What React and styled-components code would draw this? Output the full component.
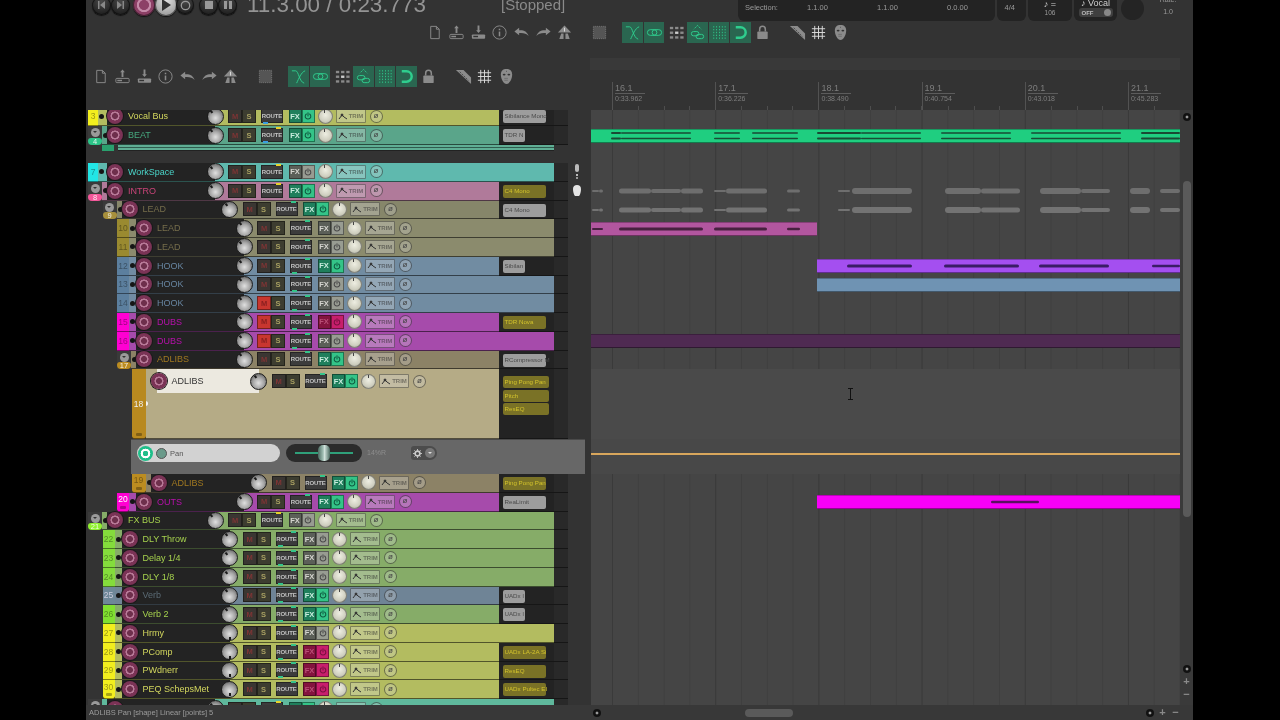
import React from 'react';
import styled, { createGlobalStyle } from 'styled-components';

const GlobalStyle = createGlobalStyle`
  html, body { margin: 0; padding: 0; background: #000; }
  body { font-family: "Liberation Sans", Arial, sans-serif; }
`;

const App = styled.div`
  width: 1107px;
  height: 720px;
  margin-left: 86px;
  background: #333;
  overflow: hidden;
  display: flex;
  flex-direction: column;
  color: #aaa;
  filter: blur(0.3px);
`;

/* ---------- header ---------- */
const TopStrip = styled.div`
  height: 58px;
  flex: none;
  overflow: hidden;
`;
const TopRow = styled.div`
  height: 10px;
  display: flex;
  align-items: center;
  padding-left: 6px;
  margin-bottom: 11px;
`;
const Transport = styled.div`
  width: 155px;
  display: flex;
  align-items: center;
  flex: none;
`;
const RoundBtn = styled.div`
  width: ${(p) => p.$size}px;
  height: ${(p) => p.$size}px;
  margin-left: ${(p) => p.$gap || 0}px;
  flex: none;
  border-radius: 50%;
  display: flex;
  align-items: center;
  justify-content: center;
  background: ${(p) => p.$bg || 'radial-gradient(circle at 50% 30%, #4a4a4a, #232323 70%)'};
  box-shadow: 0 1px 1px #111, inset 0 0 0 1px rgba(0, 0, 0, 0.5);
`;
const TimeText = styled.div`
  width: 254px;
  flex: none;
  font-size: 22.4px;
  line-height: 22px;
  color: #949494;
  white-space: nowrap;
`;
const StoppedText = styled.div`
  width: 237px;
  flex: none;
  font-size: 15px;
  line-height: 16px;
  color: #8a8a8a;
`;
const InfoPanel = styled.div`
  height: 21px;
  width: ${(p) => p.$w}px;
  margin-right: 2px;
  flex: none;
  align-self: flex-start;
  background: #232323;
  border-radius: 0 0 6px 6px;
  font-size: 7.5px;
  color: #9a9a9a;
  display: flex;
  align-items: center;
  justify-content: ${(p) => (p.$center ? 'center' : 'flex-start')};
  overflow: hidden;
`;
const SelCell = styled.span`
  width: ${(p) => p.$w}px;
  flex: none;
  padding-bottom: 7px;
`;
const StackCell = styled.div`
  height: 21px;
  width: 100%;
  display: flex;
  flex-direction: column;
  align-items: center;
  justify-content: flex-end;
  padding-bottom: 4px;
  box-sizing: border-box;
  font-size: 6.5px;
  line-height: 8px;
`;
const NoteLine = styled.div`
  font-size: 9px;
  line-height: 7px;
  color: #cfcfcf;
  height: 7px;
  margin-bottom: 1px;
  white-space: nowrap;
`;
const OffToggle = styled.div`
  width: 34px;
  height: 9px;
  background: #3f3f3f;
  border-radius: 3px;
  display: flex;
  align-items: center;
  justify-content: space-between;
  padding: 0 2px 0 3px;
  box-sizing: border-box;
  font-size: 6px;
  font-weight: bold;
  color: #bbb;
`;
const OffDot = styled.span`
  width: 7px;
  height: 7px;
  border-radius: 50%;
  background: #888;
`;
const BigKnob = styled.div`
  width: 23px;
  height: 23px;
  margin: -3px 0 0 2px;
  flex: none;
  align-self: flex-start;
  border-radius: 50%;
  background: #242424;
`;
const RateBlock = styled.div`
  margin: -6px 0 0 12px;
  width: 24px;
  text-align: center;
  font-size: 7px;
  line-height: 12px;
  color: #999;
  align-self: flex-start;
`;

const Toolbar = styled.div`
  display: flex;
  align-items: center;
  height: 22px;
  padding-left: ${(p) => p.$left}px;
`;
const ToolGroup = styled.div`
  display: flex;
  margin-left: ${(p) => p.$gap || 0}px;
`;
const Slot = styled.div`
  width: 21.7px;
  height: 21px;
  flex: none;
  display: flex;
  align-items: center;
  justify-content: center;
  background: ${(p) => (p.$active ? '#2a6650' : 'transparent')};
  border-right: ${(p) => (p.$active ? '1px solid #333' : 'none')};
  box-sizing: border-box;
`;

const G = '#8b8b8b';
const A = '#2fce8e';
const toolPaths = {
  doc: <path d="M5 2.5h6l3 3v10H5z M11 2.5v3h3" fill="none" stroke={G} strokeWidth="1" />,
  up: (
    <>
      <path d="M9 1.5l2.5 3H10v5H8v-5H6.5z" fill={G} />
      <rect x="2" y="11" width="14" height="4.5" rx="1" fill="none" stroke={G} />
      <rect x="3.5" y="12.5" width="5" height="1.5" fill={G} />
    </>
  ),
  down: (
    <>
      <path d="M9 9.5l2.5-3H10v-5H8v5H6.5z" fill={G} />
      <rect x="2" y="11" width="14" height="4.5" rx="1" fill={G} />
      <rect x="3.5" y="12.5" width="5" height="1.5" fill="#333" />
    </>
  ),
  info: (
    <>
      <circle cx="9" cy="9" r="7" fill="none" stroke={G} />
      <rect x="8.2" y="8" width="1.6" height="5" fill={G} />
      <rect x="8.2" y="5" width="1.6" height="1.6" fill={G} />
    </>
  ),
  undo: <path d="M1.5 8l5-4v2.6c4.5-.5 8.5 1.2 10 6-2.4-2.5-5.5-3.4-10-3V12z" fill={G} />,
  redo: <path d="M16.5 8l-5-4v2.6c-4.5-.5-8.5 1.2-10 6 2.4-2.5 5.5-3.4 10-3V12z" fill={G} />,
  road: (
    <>
      <path d="M9 1.5l7 7.5H2z" fill={G} />
      <path d="M5.5 10H8v6H3.5z M10 10h2.5l2 6H10z" fill={G} />
      <path d="M9 4v4" stroke="#ddd" strokeWidth="1" />
    </>
  ),
  square: <rect x="2.5" y="2.5" width="13" height="13" fill="#555" stroke="#777" strokeDasharray="1 1" />,
  cross: <path d="M2 3h4c3 0 4 12 9 13 M16 3c-4 1-7 9-9 13" fill="none" stroke={A} strokeWidth="1" />,
  link: (
    <>
      <rect x="1.5" y="6" width="10" height="6" rx="3" fill="none" stroke={A} />
      <rect x="6.5" y="6" width="10" height="6" rx="3" fill="none" stroke={A} />
    </>
  ),
  grid: (
    <g fill={G}>
      {[3, 8, 13].map((y) => [2, 7.5, 13].map((x) => (
        <rect key={`${x}-${y}`} x={x} y={y} width="3.5" height="2.5" fill={x === 7.5 && y === 8 ? '#ccc' : G} />
      )))}
    </g>
  ),
  group: (
    <>
      <path d="M9 1.5l4 4M9 1.5l-4 4" stroke={A} strokeDasharray="1.5 1" fill="none" />
      <rect x="2.5" y="8" width="8" height="4.5" rx="2.2" fill="none" stroke={A} />
      <rect x="7.5" y="11" width="8" height="4.5" rx="2.2" fill="none" stroke={A} />
    </>
  ),
  dots: (
    <g fill={A}>
      {[3, 6, 9, 12, 15].map((x) => [3, 6, 9, 12, 15].map((y) => (
        <rect key={`${x}-${y}`} x={x - 0.5} y={y - 0.7} width="0.9" height="1.4" />
      )))}
    </g>
  ),
  magnet: <path d="M4 3.5h5a5.5 5.5 0 0 1 0 11H4" fill="none" stroke={A} strokeWidth="2.6" />,
  lock: (
    <>
      <rect x="3.5" y="8" width="11" height="8" rx="1" fill={G} />
      <path d="M6 8V5.5a3 3 0 0 1 6 0V8" fill="none" stroke={G} strokeWidth="1.6" />
    </>
  ),
  ruler: (
    <>
      <path d="M1 2h8l8 8v7z" fill={G} />
      <path d="M5 4l9 9" stroke="#333" strokeDasharray="1.5 1.5" />
    </>
  ),
  hash: <path d="M5 2v14M9 2v14M13 2v14M2 5h14M2 9h14M2 13h14" stroke="#ddd" strokeWidth="1" fill="none" />,
  mask: (
    <>
      <path d="M9 1c4 0 6 2 6 6 0 5-3 10-6 10s-6-5-6-10c0-4 2-6 6-6z" fill={G} />
      <ellipse cx="6.5" cy="7" rx="1.5" ry="1" fill="#333" />
      <ellipse cx="11.5" cy="7" rx="1.5" ry="1" fill="#333" />
      <path d="M7 11h4M7 13h4M9 3v2" stroke="#444" strokeWidth="0.8" strokeDasharray="1 1" />
    </>
  ),
};

const ToolIcon = ({ name, active }) => (
  <Slot $active={active}>
    <svg width="17" height="17" viewBox="0 0 18 18">{toolPaths[name]}</svg>
  </Slot>
);

const ToolRow = ({ left }) => (
  <Toolbar $left={left}>
    <ToolGroup>
      {['doc', 'up', 'down', 'info', 'undo', 'redo', 'road'].map((n) => <ToolIcon key={n} name={n} />)}
    </ToolGroup>
    <ToolGroup $gap={13}><ToolIcon name="square" /></ToolGroup>
    <ToolGroup $gap={11.5}>
      <ToolIcon name="cross" active />
      <ToolIcon name="link" active />
      <ToolIcon name="grid" />
      <ToolIcon name="group" active />
      <ToolIcon name="dots" active />
      <ToolIcon name="magnet" active />
      <ToolIcon name="lock" />
    </ToolGroup>
    <ToolGroup $gap={12.5}>
      <ToolIcon name="ruler" />
      <ToolIcon name="hash" />
      <ToolIcon name="mask" />
    </ToolGroup>
  </Toolbar>
);

/* ---------- body columns ---------- */
const Main = styled.div`
  flex: 1;
  display: flex;
  min-height: 0;
`;
const LeftCol = styled.div`
  width: 505px;
  flex: none;
  display: flex;
  flex-direction: column;
  min-height: 0;
`;
const LeftBar = styled.div`
  height: 52px;
  flex: none;
  padding-top: 7px;
  box-sizing: border-box;
`;
const TrackScroll = styled.div`
  flex: 1;
  overflow: hidden;
  width: 499px;
`;
const Stack = styled.div`
  margin-top: -3px;
`;

/* ---------- track rows ---------- */
const Row = styled.div`
  height: ${(p) => p.$h}px;
  display: flex;
  width: 499px;
  padding-left: ${(p) => 2 + p.$d * 14.5}px;
  box-sizing: border-box;
`;
const NumCell = styled.div`
  width: ${(p) => p.$w}px;
  flex: none;
  position: relative;
  background: ${(p) => p.$bg};
  color: ${(p) => p.$fg};
  font-size: 8.5px;
  display: flex;
  align-items: center;
  justify-content: center;
  border-bottom: 1px solid rgba(0, 0, 0, 0.45);
  border-radius: ${(p) => (p.$foot ? '0 0 3px 3px' : '0')};
  box-sizing: border-box;
  padding-bottom: ${(p) => (p.$foot && !p.$tall ? 5 : 0)}px;
  overflow: hidden;
`;
const FootIcon = styled.span`
  position: absolute;
  left: 50%;
  bottom: 2px;
  margin-left: -3px;
  width: 6px;
  height: 3px;
  background: rgba(0, 0, 0, 0.3);
  border-radius: 1px;
`;
const FolderCell = styled.div`
  width: 14px;
  flex: none;
  position: relative;
  background: #3a3a3a;
  display: flex;
  justify-content: center;
  padding-top: 1px;
  box-sizing: border-box;
`;
const FolderIcon = styled.span`
  width: 9px;
  height: 9px;
  margin-top: 1px;
  border-radius: 50%;
  background: #9a9a9a;
  position: relative;
  &::after {
    content: '';
    position: absolute;
    left: 2px;
    top: 3px;
    border: 2.5px solid transparent;
    border-top-color: #333;
    border-bottom-width: 0;
  }
`;
const NumPill = styled.span`
  position: absolute;
  left: 0;
  right: 0;
  bottom: 0;
  height: 7px;
  border-radius: 3px 3px 4px 4px;
  background: ${(p) => p.$bg};
  color: rgba(255, 255, 255, 0.85);
  font-size: 7.5px;
  line-height: 7px;
  text-align: center;
`;
const Inner = styled.div`
  flex: 1;
  min-width: 0;
  display: flex;
  align-items: flex-start;
  background: ${(p) => p.$bg};
  border-bottom: 1px solid rgba(0, 0, 0, 0.55);
  box-sizing: border-box;
`;
const Tab = styled.div`
  width: ${(p) => p.$w}px;
  height: ${(p) => p.$line}px;
  flex: none;
  display: flex;
  align-items: center;
`;
const PortDot = styled.span`
  width: 5px;
  height: 5px;
  margin-left: ${(p) => (p.$light ? -2.5 : 1)}px;
  margin-top: ${(p) => (p.$light ? 44 : 0)}px;
  flex: none;
  border-radius: 50%;
  background: ${(p) => (p.$light ? '#f2f2f2' : '#151515')};
`;
const NamePanel = styled.div`
  width: 108px;
  height: ${(p) => p.$line}px;
  flex: none;
  display: flex;
  align-items: center;
  background: ${(p) => (p.$selected ? 'linear-gradient(90deg, transparent 6px, #ece9e0 6px)' : '#232323')};
`;
const ArmBtn = styled.div`
  width: 16px;
  height: 16px;
  flex: none;
  border-radius: 50%;
  background: radial-gradient(circle at 50% 50%, #6e2f4c 0 24%, #b87a98 28% 38%, #7b3356 42% 62%, #53223b 90%);
  box-shadow: 0 0 0 1px #181818;
`;
const TrackName = styled.div`
  flex: 1;
  min-width: 0;
  padding-left: 5px;
  font-size: 9px;
  color: ${(p) => p.$color};
  white-space: nowrap;
  overflow: hidden;
`;
const PanKnob = styled.div`
  width: 17px;
  height: 17px;
  flex: none;
  margin-right: -8.5px;
  border-radius: 50%;
  border: 1px solid #1c1c1c;
  box-sizing: border-box;
  position: relative;
  z-index: 1;
  background: radial-gradient(circle at 50% 60%, #e0e0e0 0, #a8a8a8 45%, #5a5a5a 90%);
  &::after {
    content: '';
    position: absolute;
    left: 6.5px;
    top: 0.5px;
    width: 2px;
    height: 3px;
    background: #1a1a1a;
    transform-origin: 1px 7px;
    transform: rotate(${(p) => p.$angle}deg);
  }
`;
const Strip = styled.div`
  flex: 1;
  min-width: 0;
  height: ${(p) => p.$line}px;
  display: flex;
  align-items: center;
  padding-left: 13px;
`;
const PairBtn = styled.div`
  width: ${(p) => p.$w}px;
  height: 14px;
  flex: none;
  margin-left: ${(p) => p.$gap || 0}px;
  display: flex;
  align-items: center;
  justify-content: center;
  box-sizing: border-box;
  font-size: 7.5px;
  font-weight: bold;
  background: ${(p) => p.$bg};
  color: ${(p) => p.$fg};
  box-shadow: inset 0 0 0 1px rgba(0, 0, 0, 0.4);
  position: relative;
`;
const RouteDot = styled.span`
  position: absolute;
  width: 5px;
  height: 2px;
  background: ${(p) => p.$color};
  top: ${(p) => (p.$low ? 'auto' : '-1px')};
  bottom: ${(p) => (p.$low ? '-1px' : 'auto')};
  left: ${(p) => (p.$low ? '2px' : 'auto')};
  right: ${(p) => (p.$low ? 'auto' : '2px')};
`;
const RouteText = styled.span`
  font-size: 6px;
  letter-spacing: -0.1px;
`;
const VolKnob = styled.div`
  width: 15px;
  height: 15px;
  flex: none;
  margin-left: ${(p) => p.$gap}px;
  border-radius: 50%;
  border: 1px solid rgba(20, 20, 20, 0.4);
  box-sizing: border-box;
  background: radial-gradient(circle at 50% 40%, #eeeee2, #cfcfc0 60%, #a5a594);
  position: relative;
  &::after {
    content: '';
    position: absolute;
    left: 5.5px;
    top: 0;
    width: 1px;
    height: 3px;
    background: #444;
  }
`;
const TrimBtn = styled.div`
  width: 30px;
  height: 14px;
  flex: none;
  margin-left: 3px;
  display: flex;
  align-items: center;
  justify-content: center;
  gap: 1px;
  box-sizing: border-box;
  border: 1px solid rgba(0, 0, 0, 0.35);
  border-radius: 1px;
  background: rgba(225, 225, 225, 0.32);
  color: rgba(40, 40, 40, 0.5);
  font-size: 6px;
  font-weight: bold;
`;
const PhaseBtn = styled.div`
  width: 13px;
  height: 13px;
  flex: none;
  margin-left: 4px;
  border-radius: 50%;
  border: 1px solid rgba(0, 0, 0, 0.45);
  box-sizing: border-box;
  background: rgba(225, 225, 225, 0.28);
  color: #444;
  font-size: 8px;
  line-height: 10px;
  text-align: center;
`;
const FxArea = styled.div`
  width: 55px;
  flex: none;
  background: #232323;
  display: flex;
  flex-direction: column;
  align-items: flex-start;
  gap: 1.5px;
  padding: ${(p) => (p.$tall ? 7 : 3)}px 0 0 3.5px;
  box-sizing: border-box;
  border-bottom: 1px solid #161616;
  overflow: hidden;
`;
const Chip = styled.div`
  width: ${(p) => p.$w}px;
  height: ${(p) => (p.$tall ? 12 : 13)}px;
  flex: none;
  border-radius: 2px;
  padding-left: 2px;
  box-sizing: border-box;
  font-size: 6.2px;
  line-height: 12px;
  white-space: nowrap;
  background: ${(p) => (p.$on ? '#7a7226' : '#9d9d9d')};
  color: ${(p) => (p.$on ? '#d2c22c' : '#4a4a4a')};
`;
const Tail = styled.div`
  width: 14px;
  flex: none;
  background: #292929;
  border-bottom: 1px solid #161616;
  box-sizing: border-box;
`;
const Side = styled.div`
  width: 17px;
  flex: none;
  display: flex;
  align-items: center;
  justify-content: center;
`;
const SepRow = styled.div`
  height: 18px;
  width: 482px;
  padding-left: 16px;
  box-sizing: border-box;
`;
const SepInner = styled.div`
  height: 6px;
  display: flex;
`;
const SepGreen = styled.div`
  width: 12px;
  background: #2aa06e;
  margin-right: 4px;
`;
const SepBars = styled.div`
  flex: 1;
  background: linear-gradient(#5fae94 0 2px, #2f5c4e 2px 3px, #5fae94 3px 5px, #222 5px);
  margin-right: 14px;
`;

/* ---------- envelope lane in the track panel ---------- */
const EnvLane = styled.div`
  height: 35px;
  width: 454px;
  margin-left: 45px;
  padding: 4px 0 0 6px;
  box-sizing: border-box;
  background: #676767;
  border-top: 1px solid #4a4a4a;
  display: flex;
  align-items: flex-start;
  color: #8d8d8d;
  font-size: 7px;
`;
const EnvName = styled.div`
  width: 143px;
  height: 18px;
  flex: none;
  border-radius: 9px;
  background: #d2d2d2;
  display: flex;
  align-items: center;
  gap: 3px;
  padding-left: 1px;
  box-sizing: border-box;
  color: #555;
  font-size: 7.5px;
`;
const EnvRing = styled.span`
  width: 15px;
  height: 15px;
  border-radius: 50%;
  background: radial-gradient(circle, #1fbf8a 0 25%, #fff 28% 45%, #1fbf8a 48%);
`;
const EnvPower = styled.span`
  width: 9px;
  height: 9px;
  border-radius: 50%;
  background: #6a9a8a;
  border: 1px solid #555;
`;
const EnvSlider = styled.div`
  width: 76px;
  height: 18px;
  margin-left: 6px;
  flex: none;
  border-radius: 9px;
  background: #2b2b2b;
  display: flex;
  align-items: center;
  justify-content: center;
  position: relative;
  &::before {
    content: '';
    position: absolute;
    left: 9px;
    right: 9px;
    top: 8px;
    height: 1.5px;
    background: #2fa07a;
  }
`;
const EnvThumb = styled.span`
  width: 12px;
  height: 16px;
  border-radius: 5px;
  position: relative;
  background: linear-gradient(90deg, #4a6a60, #a8c4ba 45%, #d8e8e2 52%, #4a6a60);
`;
const EnvValue = styled.div`
  width: 44px;
  margin-left: 5px;
  line-height: 18px;
  flex: none;
`;
const GearBtn = styled.div`
  width: 26px;
  height: 14px;
  margin-top: 2px;
  border-radius: 3px 7px 7px 3px;
  background: #4c4c4c;
  display: flex;
  align-items: center;
  justify-content: space-between;
  padding: 0 2px;
  box-sizing: border-box;
`;
const GearDrop = styled.span`
  width: 10px;
  height: 10px;
  border-radius: 50%;
  background: #777;
  display: flex;
  align-items: center;
  justify-content: center;
  &::after {
    content: '';
    border: 2.5px solid transparent;
    border-top-color: #ddd;
    border-bottom-width: 0;
  }
`;

/* ---------- arrange view ---------- */
const RightCol = styled.div`
  flex: 1;
  min-width: 0;
  display: flex;
  flex-direction: column;
`;
const Band = styled.div`
  height: 12px;
  flex: none;
  width: 590px;
  margin-left: -1px;
  background: #393939;
`;
const Ruler = styled.div`
  height: 40px;
  flex: none;
  width: 589px;
  display: flex;
  padding-left: 21px;
  box-sizing: border-box;
  overflow: hidden;
`;
const RulerBar = styled.div`
  width: 103.2px;
  flex: none;
  height: 28px;
  margin-top: 12px;
  box-sizing: border-box;
  padding: 1px 0 0 2px;
  border-left: 1px solid #525252;
  font-size: 7px;
  color: #7e7e7e;
  background:
    repeating-linear-gradient(90deg, transparent 0 24.8px, #4e4e4e 24.8px 25.8px) 0 100% / 100% 4px no-repeat;
`;
const RulerTop = styled.div`
  font-size: 9px;
  line-height: 10px;
  width: 30px;
  border-bottom: 1px solid #5c5c5c;
`;
const RulerSub = styled.div`
  line-height: 10px;
`;
const ArrangeRow = styled.div`
  flex: 1;
  display: flex;
  min-height: 0;
`;
const Arrange = styled.div`
  width: 589px;
  flex: none;
  position: relative;
  overflow: hidden;
  background-color: #454545;
  background-image:
    linear-gradient(90deg, #3a3a3a 1px, transparent 1px),
    linear-gradient(90deg, #3f3f3f 1px, transparent 1px);
  background-size: 103.2px 100%, 25.8px 100%;
  background-position: 21px 0, 21px 0;
`;
const LaneStack = styled.div`
  margin-top: -3px;
`;
const Lane = styled.div`
  height: ${(p) => p.$h}px;
  display: flex;
  align-items: ${(p) => (p.$top ? 'flex-start' : 'center')};
  background: ${(p) => p.$bg || 'transparent'};
`;
const Clip = styled.div`
  margin-left: ${(p) => p.$x}px;
  width: ${(p) => p.$w}px;
  height: 14px;
  flex: none;
  background: ${(p) => p.$bg || 'transparent'};
  box-shadow: ${(p) => (p.$bg ? 'inset 0 -1px 0 rgba(0, 0, 0, 0.4), inset 0 1px 0 rgba(0, 0, 0, 0.25)' : 'none')};
`;
const EnvLine = styled.div`
  width: 100%;
  height: 1.5px;
  margin-top: 14px;
  background: #d8a65c;
`;
const TextCursor = styled.svg`
  position: absolute;
  left: 256px;
  top: 278px;
`;
const VScroll = styled.div`
  width: 13px;
  flex: none;
  display: flex;
  flex-direction: column;
  align-items: center;
  padding: 3px 0 4px;
  box-sizing: border-box;
  background: #3a3a3a;
`;
const Thumb = styled.div`
  width: 8px;
  height: 336px;
  margin: 60px 0 auto;
  border-radius: 4px;
  background: #5a5a5a;
`;
const ScrollDot = styled.span`
  width: 8px;
  height: 8px;
  flex: none;
  border-radius: 50%;
  background: radial-gradient(circle, #999 0 22%, #111 30%);
`;
const ZoomGlyph = styled.span`
  width: 9px;
  height: 13px;
  flex: none;
  margin-top: ${(p) => p.$gap || 0}px;
  font-size: 11px;
  font-weight: bold;
  line-height: 13px;
  text-align: center;
  color: #8a8a8a;
`;

const StatusBar = styled.div`
  height: 15px;
  flex: none;
  display: flex;
  align-items: center;
  background: #383838;
`;
const StatusText = styled.div`
  width: 505px;
  flex: none;
  padding-left: 3px;
  box-sizing: border-box;
  font-size: 7.5px;
  color: #9c9c9c;
`;
const HScroll = styled.div`
  flex: 1;
  display: flex;
  align-items: center;
  padding: 0 13px 0 2px;
`;
const HThumb = styled.div`
  width: 48px;
  height: 8px;
  margin: 0 auto 0 144px;
  border-radius: 4px;
  background: #5a5a5a;
`;
const ZoomGroup = styled.div`
  display: flex;
  align-items: center;
  gap: 4px;
`;

/* ---------- data ---------- */
const waves = {
  grey: [[1, 8, 1], [8, 12, 1.5], [28, 60, 2.5], [60, 90, 2], [90, 112, 2.5], [123, 135, 1], [135, 176, 2.5], [196, 209, 1.5], [247, 259, 1], [261, 321, 3], [354, 390, 3], [390, 429, 2.5], [449, 490, 3], [490, 519, 2], [539, 559, 3], [569, 589, 2]],
  beat: [[20, 30, 1], [30, 100, 0.7], [123, 149, 0.8], [161, 207, 0.8], [226, 270, 1], [270, 330, 0.7], [350, 420, 0.8], [440, 530, 0.8], [550, 589, 1]],
  lead: [[1, 12, 1], [28, 112, 1.6], [123, 176, 1.6], [196, 209, 1.2]],
  hook: [[30, 95, 1.6], [127, 202, 1.6], [222, 292, 1.6], [335, 363, 1.3]],
  outs: [[174, 222, 1.3]],
};

const Wave = ({ segments, color, lanes = [7] }) => (
  <svg width="100%" height="14" style={{ display: 'block' }}>
    {lanes.map((y) =>
      segments.map(([a, b, h]) => (
        <rect key={`${y}-${a}`} x={a} y={y - h} width={b - a} height={h * 2} rx={h} fill={color} />
      )),
    )}
  </svg>
);

const wide = true;
const Y = '#e8d22a';
const B = '#3a9fe0';
const N = '#36c48a';
const yb = [Y, B];
const gg = [N, N];
const g1 = [N, null];
const y1 = [Y, null];

const OLIVE = { strip: '#b3bc60', ink: '#d3d75e', cell: '#f2ee1e' };
const FX = { strip: '#86ac68', ink: '#a6d24e', cell: '#84dc3c' };
const LEADC = { strip: '#8b8b6d', ink: '#756d4b', cell: '#9a8a30' };
const HOOKC = { strip: '#718ca2', ink: '#6886a2', cell: '#5c7f9e' };
const DUB = { strip: '#a64bab', ink: '#b810ac', cell: '#ff00d2' };
const ADL = { strip: '#8c8266', ink: '#a07820', cell: '#bb8c20' };

const rows = [
  { num: 3, name: 'Vocal Bus', d: 0, h: 19, ...OLIVE, fx: 'green', dots: yb, chips: [['Sibilance Mono', 43]], angle: -40 },
  { num: 4, name: 'BEAT', d: 0, h: 19, strip: '#5aa58a', ink: '#46a87e', cell: '#2cc488', folder: true, fx: 'green', dots: yb, chips: [['TDR N', 22]], angle: -40,
    lane: <Clip $x={0} $w={589} $bg="#1fce80"><Wave segments={waves.beat} color="#1a4a34" lanes={[4, 9.5]} /></Clip> },
  { sep: true },
  { num: 7, name: 'WorkSpace', d: 0, strip: '#5fb9ae', ink: '#4ad4c8', cell: '#22e6e6', fx: 'grey', dots: y1, wide, angle: -40, side: 'mic' },
  { num: 8, name: 'INTRO', d: 0, strip: '#b07a9a', ink: '#ca4479', cell: '#f4589a', folder: true, fx: 'green', dots: y1, chips: [['C4 Mono', 43, 1]], angle: -40, side: 'head',
    lane: <Clip $x={0} $w={589}><Wave segments={waves.grey} color="#6e6e6e" /></Clip> },
  { num: 9, name: 'LEAD', d: 1, ...LEADC, cell: '#a8903c', folder: true, fx: 'green', dots: g1, chips: [['C4 Mono', 43]], angle: -40, strip: '#86866a',
    lane: <Clip $x={0} $w={589}><Wave segments={waves.grey} color="#737373" /></Clip> },
  { num: 10, name: 'LEAD', d: 2, ...LEADC, fx: 'grey', dots: g1, wide, angle: -40,
    lane: <Clip $x={0} $w={226} $bg="#b2569f"><Wave segments={waves.lead} color="#47213f" /></Clip> },
  { num: 11, name: 'LEAD', d: 2, ...LEADC, fx: 'grey', dots: g1, wide, angle: -40 },
  { num: 12, name: 'HOOK', d: 2, ...HOOKC, fx: 'green', dots: gg, chips: [['Sibilan', 22]], angle: -40,
    lane: <Clip $x={226} $w={363} $bg="#a44ff0"><Wave segments={waves.hook} color="#3a1c66" /></Clip> },
  { num: 13, name: 'HOOK', d: 2, ...HOOKC, fx: 'grey', dots: gg, wide, angle: -40,
    lane: <Clip $x={226} $w={363} $bg="#6f93b3" /> },
  { num: 14, name: 'HOOK', d: 2, ...HOOKC, fx: 'grey', dots: gg, wide, angle: -40, mute: true },
  { num: 15, name: 'DUBS', d: 2, ...DUB, fx: 'red', dots: gg, chips: [['TDR Nova', 43, 1]], angle: -40, mute: true },
  { num: 16, name: 'DUBS', d: 2, ...DUB, fx: 'grey', dots: gg, wide, angle: -40, mute: true,
    lane: <Clip $x={0} $w={589} $bg="#4f2a52" /> },
  { num: 17, name: 'ADLIBS', d: 2, ...ADL, folder: true, fx: 'green', dots: g1, chips: [['RCompressor M', 43]], angle: -40 },
  { num: 18, name: 'ADLIBS', d: 3, h: 69.75, tall: true, strip: '#b5ab86', ink: '#333', cell: '#b8891f', fg: '#eee', foot: true, fx: 'green', dots: g1, chips: [['Ping Pong Pan', 46, 1], ['Pitch', 46, 1], ['ResEQ', 46, 1]], angle: -40, laneBg: '#4a4a4a' },
  { env: true },
  { num: 19, name: 'ADLIBS', d: 3, ...ADL, foot: true, fx: 'green', dots: g1, chips: [['Ping Pong Pan', 43, 1]], angle: -40 },
  { num: 20, name: 'OUTS', d: 2, ...DUB, fg: '#fff', foot: true, fx: 'green', dots: g1, chips: [['ReaLimit', 43]], angle: -40,
    lane: <Clip $x={226} $w={363} $bg="#f800f8"><Wave segments={waves.outs} color="#5a1060" /></Clip> },
  { num: 21, name: 'FX BUS', d: 0, ...FX, cell: '#90f030', folder: true, fx: 'grey', dots: y1, wide, angle: -40 },
  { num: 22, name: 'DLY Throw', d: 1, ...FX, fx: 'grey', dots: gg, wide, angle: -40 },
  { num: 23, name: 'Delay 1/4', d: 1, ...FX, fx: 'grey', dots: gg, wide, angle: -40 },
  { num: 24, name: 'DLY 1/8', d: 1, ...FX, fx: 'grey', dots: gg, wide, angle: -40 },
  { num: 25, name: 'Verb', d: 1, strip: '#6f8496', ink: '#5b6b75', cell: '#6e8798', fg: '#ccd', fx: 'green', dots: gg, chips: [['UADx l', 22]], angle: -40 },
  { num: 26, name: 'Verb 2', d: 1, ...FX, cell: '#80e030', fx: 'green', dots: gg, chips: [['UADx l', 22]], angle: -40 },
  { num: 27, name: 'Hrmy', d: 1, ...OLIVE, fx: 'grey', dots: g1, wide, angle: 180 },
  { num: 28, name: 'PComp', d: 1, ...OLIVE, fx: 'red', dots: gg, chips: [['UADx LA-2A Si', 43, 1]], angle: 180 },
  { num: 29, name: 'PWdnerr', d: 1, ...OLIVE, fx: 'red', dots: gg, chips: [['ResEQ', 43, 1]], angle: 180 },
  { num: 30, name: 'PEQ SchepsMet', d: 1, ...OLIVE, foot: true, fx: 'red', dots: g1, chips: [['UADx Pultec EI', 43, 1]], angle: 180 },
  { id: 31, name: '', d: 0, h: 20, strip: '#5fb89c', ink: '#5fb89c', cell: '#2cc488', folder: true, fx: 'green', dots: yb, wide, angle: -40 },
];

const fxStyles = {
  green: { bg: '#1f7f5c', fg: '#c8ecde', pbg: '#34c488', pfg: '#0f5a40' },
  grey: { bg: '#5b5f58', fg: '#d4d4ce', pbg: '#989c92', pfg: '#4a4a4a' },
  red: { bg: '#84143e', fg: '#b84e76', pbg: '#c81e6c', pfg: '#7a1040' },
};

const PowerIcon = ({ color }) => (
  <svg width="8" height="8" viewBox="0 0 10 10" fill="none" stroke={color} strokeWidth="1.3" strokeLinecap="round">
    <path d="M3 2.5a3.5 3.5 0 1 0 4 0" />
    <path d="M5 1v4" />
  </svg>
);

const TrimIcon = () => (
  <svg width="10" height="7" viewBox="0 0 10 7" fill="none" stroke="#333">
    <path d="M1 6l3-4 2 2 3 2" />
    <circle cx="4" cy="2" r="1" fill="#333" />
  </svg>
);

const SideIcon = ({ type }) =>
  type === 'mic' ? (
    <svg width="8" height="16" viewBox="0 0 8 16">
      <rect x="2" y="0" width="4" height="8" rx="2" fill="#bbb" />
      <rect x="3" y="10" width="2" height="2" fill="#bbb" />
      <rect x="3" y="13" width="2" height="2" fill="#999" />
    </svg>
  ) : (
    <svg width="8" height="12" viewBox="0 0 8 12">
      <path d="M4 0c2.5 0 4 1.5 4 4 0 3-1 6-2 7H2C1 10 0 7 0 4c0-2.5 1.5-4 4-4z" fill="#e4e4e4" />
    </svg>
  );

const TrackRow = ({ t }) => {
  const h = t.h || 18.75;
  const line = t.tall ? 24 : h - 1;
  const cellW = t.folder ? 14 : t.d === 0 ? 10 : t.d === 3 ? 14 : 12;
  const f = fxStyles[t.fx];
  return (
    <Row $h={h} $d={t.d}>
      {t.folder ? (
        <FolderCell>
          <FolderIcon />
          <NumPill $bg={t.cell}>{t.num}</NumPill>
        </FolderCell>
      ) : (
        <NumCell $w={cellW} $bg={t.cell} $fg={t.fg || 'rgba(0,0,0,0.38)'} $foot={t.foot} $tall={t.tall}>
          {t.num}
          {t.foot && <FootIcon />}
        </NumCell>
      )}
      <Inner $bg={t.strip}>
        <Tab $w={19 - cellW} $line={line}>
          <PortDot $light={t.tall} />
        </Tab>
        <NamePanel $line={line} $selected={t.tall}>
          <ArmBtn />
          <TrackName $color={t.ink}>{t.name}</TrackName>
          <PanKnob $angle={t.angle} />
        </NamePanel>
        <Strip $line={line}>
          <PairBtn $w={14} $bg={t.mute ? '#c8362f' : '#3a3632'} $fg={t.mute ? '#8a2020' : '#7e3434'}>M</PairBtn>
          <PairBtn $w={14} $bg="#3d3d30" $fg="#a8a062">S</PairBtn>
          <PairBtn $w={22} $gap={5} $bg="#3c3c3c" $fg="#c4c4c4">
            <RouteText>ROUTE</RouteText>
            {t.dots[0] && <RouteDot $color={t.dots[0]} />}
            {t.dots[1] && <RouteDot $color={t.dots[1]} $low />}
          </PairBtn>
          <PairBtn $w={13} $gap={5.5} $bg={f.bg} $fg={f.fg}>FX</PairBtn>
          <PairBtn $w={13} $bg={f.pbg} $fg={f.pfg}><PowerIcon color={f.pfg} /></PairBtn>
          <VolKnob $gap={3} />
          <TrimBtn><TrimIcon />TRIM</TrimBtn>
          <PhaseBtn>ø</PhaseBtn>
        </Strip>
      </Inner>
      {!t.wide && (
        <FxArea $tall={t.tall}>
          {t.chips.map(([text, w, on]) => (
            <Chip key={text} $w={w} $on={on} $tall={t.tall}>{text}</Chip>
          ))}
        </FxArea>
      )}
      <Tail />
      <Side>{t.side && <SideIcon type={t.side} />}</Side>
    </Row>
  );
};

const bars = [
  ['16.1', '0:33.962'], ['17.1', '0:36.226'], ['18.1', '0:38.490'],
  ['19.1', '0:40.754'], ['20.1', '0:43.018'], ['21.1', '0:45.283'],
];

export default function DawView() {
  return (
    <>
      <GlobalStyle />
      <App>
        <TopStrip>
          <TopRow>
            <Transport>
              <RoundBtn $size={19}><svg width="9" height="8" viewBox="0 0 9 8"><path d="M1 0h1.5v8H1zM8 0v8L3 4z" fill="#888" /></svg></RoundBtn>
              <RoundBtn $size={19}><svg width="9" height="8" viewBox="0 0 9 8"><path d="M8 0H6.5v8H8zM1 0v8l5-4z" fill="#888" /></svg></RoundBtn>
              <RoundBtn $size={22} $gap={3} $bg="radial-gradient(circle, #8c4066 0 30%, #c48aa8 34% 44%, #8c4066 48% 70%, #5c2942)" />
              <RoundBtn $size={22} $bg="radial-gradient(circle at 50% 30%, #e0e0e0, #a4a4a4 70%)"><svg width="10" height="12" viewBox="0 0 10 12"><path d="M1 0l9 6-9 6z" fill="#333" /></svg></RoundBtn>
              <RoundBtn $size={18} $gap={-1}><svg width="11" height="11" viewBox="0 0 11 11" fill="none" stroke="#9a9a9a" strokeWidth="1.3"><circle cx="5.5" cy="5.5" r="4.2" /></svg></RoundBtn>
              <RoundBtn $size={19} $gap={5}><svg width="8" height="8"><rect width="8" height="8" fill="#999" /></svg></RoundBtn>
              <RoundBtn $size={19}><svg width="8" height="8"><path d="M0 0h3v8H0zM5 0h3v8H5z" fill="#999" /></svg></RoundBtn>
            </Transport>
            <TimeText>11.3.00 / 0:23.773</TimeText>
            <StoppedText>[Stopped]</StoppedText>
            <InfoPanel $w={257}>
              <SelCell $w={7} />
              <SelCell $w={62}>Selection:</SelCell>
              <SelCell $w={70}>1.1.00</SelCell>
              <SelCell $w={70}>1.1.00</SelCell>
              <SelCell $w={40}>0.0.00</SelCell>
            </InfoPanel>
            <InfoPanel $w={29} $center><SelCell $w={14}>4/4</SelCell></InfoPanel>
            <InfoPanel $w={44} $center>
              <StackCell>
                <NoteLine>♪ =</NoteLine>
                106
              </StackCell>
            </InfoPanel>
            <InfoPanel $w={43} $center>
              <StackCell>
                <NoteLine>♪ Vocal</NoteLine>
                <OffToggle>OFF<OffDot /></OffToggle>
              </StackCell>
            </InfoPanel>
            <BigKnob />
            <RateBlock>Rate:<br />1.0</RateBlock>
          </TopRow>
          <ToolRow left={338} />
        </TopStrip>
        <Main>
          <LeftCol>
            <LeftBar><ToolRow left={4} /></LeftBar>
            <TrackScroll>
              <Stack>
                {rows.map((t, i) => {
                  if (t.sep) {
                    return (
                      <SepRow key={i}>
                        <SepInner><SepGreen /><SepBars /></SepInner>
                      </SepRow>
                    );
                  }
                  if (t.env) {
                    return (
                      <EnvLane key={i}>
                        <EnvName><EnvRing /><EnvPower />Pan</EnvName>
                        <EnvSlider><EnvThumb /></EnvSlider>
                        <EnvValue>14%R</EnvValue>
                        <GearBtn>
                          <svg width="9" height="9" viewBox="0 0 10 10">
                            <circle cx="5" cy="5" r="2.7" fill="none" stroke="#ccc" strokeWidth="1.8" />
                            <path d="M5 0v2M5 8v2M0 5h2M8 5h2M1.5 1.5l1.4 1.4M7.1 7.1l1.4 1.4M8.5 1.5L7.1 2.9M2.9 7.1L1.5 8.5" stroke="#ccc" />
                          </svg>
                          <GearDrop />
                        </GearBtn>
                      </EnvLane>
                    );
                  }
                  return <TrackRow key={i} t={t} />;
                })}
              </Stack>
            </TrackScroll>
          </LeftCol>
          <RightCol>
            <Band />
            <Ruler>
              {bars.map(([a, b]) => (
                <RulerBar key={a}>
                  <RulerTop>{a}</RulerTop>
                  <RulerSub>{b}</RulerSub>
                </RulerBar>
              ))}
            </Ruler>
            <ArrangeRow>
              <Arrange>
                <LaneStack>
                  {rows.map((t, i) => {
                    if (t.sep) return <Lane key={i} $h={18} />;
                    if (t.env) return <Lane key={i} $h={35} $top $bg="#484848"><EnvLine /></Lane>;
                    return <Lane key={i} $h={t.h || 18.75} $bg={t.laneBg}>{t.lane}</Lane>;
                  })}
                </LaneStack>
                <TextCursor width="7" height="12" viewBox="0 0 7 12" fill="none" stroke="#111">
                  <path d="M1 .5h5M1 11.5h5M3.5 .5v11" />
                </TextCursor>
              </Arrange>
              <VScroll>
                <ScrollDot />
                <Thumb />
                <ScrollDot />
                <ZoomGlyph $gap={2}>+</ZoomGlyph>
                <ZoomGlyph>−</ZoomGlyph>
              </VScroll>
            </ArrangeRow>
          </RightCol>
        </Main>
        <StatusBar>
          <StatusText>ADLIBS Pan [shape] Linear [points] 5</StatusText>
          <HScroll>
            <ScrollDot />
            <HThumb />
            <ZoomGroup>
              <ScrollDot />
              <ZoomGlyph>+</ZoomGlyph>
              <ZoomGlyph>−</ZoomGlyph>
            </ZoomGroup>
          </HScroll>
        </StatusBar>
      </App>
    </>
  );
}
